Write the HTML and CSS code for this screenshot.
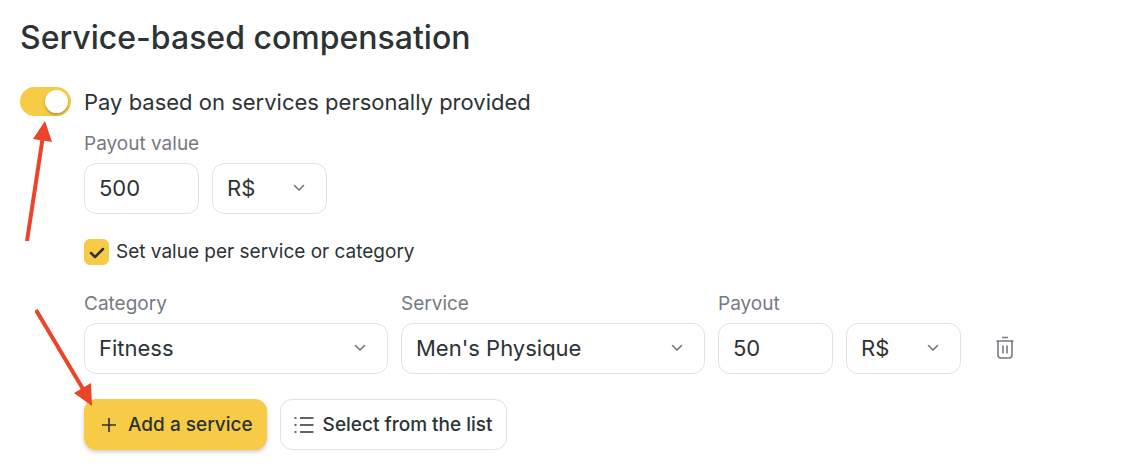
FILE: index.html
```html
<!DOCTYPE html>
<html lang="en">
<head>
    <meta charset="UTF-8">
    <meta name="viewport" content="width=device-width, initial-scale=1.0">
    <title>Service-based compensation</title>
    <link rel="stylesheet" href="styles.css">
</head>
<body>
    <main class="container">
        <h1>Service-based compensation</h1>

        <div class="toggle-row">
            <input type="checkbox" id="payServices" class="toggle" role="switch" checked>
            <label for="payServices">Pay based on services personally provided</label>
        </div>

        <div class="settings">
            <label class="field-label" for="payoutValue">Payout value</label>
            <div class="field-row">
                <input type="text" id="payoutValue" class="field field-small" value="500">
                <div class="select field-small">
                    <select class="field" aria-label="Payout value currency">
                        <option>R$</option>
                    </select>
                    <svg class="chevron" viewBox="0 0 12 8" aria-hidden="true"><path d="M1.5 1.5 6 6l4.500-4.500"/></svg>
                </div>
            </div>

            <div class="check-row">
                <span class="check">
                    <input type="checkbox" id="perService" checked>
                    <svg viewBox="0 0 25 26" aria-hidden="true"><path d="M7 14l4 4 8-8"/></svg>
                </span>
                <label for="perService">Set value per service or category</label>
            </div>

            <div class="service-row">
                <div class="form-group">
                    <label class="field-label" for="category">Category</label>
                    <div class="select">
                        <select id="category" class="field">
                            <option>Fitness</option>
                        </select>
                        <svg class="chevron" viewBox="0 0 12 8" aria-hidden="true"><path d="M1.5 1.5 6 6l4.500-4.500"/></svg>
                    </div>
                </div>
                <div class="form-group">
                    <label class="field-label" for="service">Service</label>
                    <div class="select">
                        <select id="service" class="field">
                            <option>Men's Physique</option>
                        </select>
                        <svg class="chevron" viewBox="0 0 12 8" aria-hidden="true"><path d="M1.5 1.5 6 6l4.500-4.500"/></svg>
                    </div>
                </div>
                <div class="form-group">
                    <label class="field-label" for="payout">Payout</label>
                    <input type="text" id="payout" class="field" value="50">
                </div>
                <div class="select">
                    <select class="field" aria-label="Payout currency">
                        <option>R$</option>
                    </select>
                    <svg class="chevron" viewBox="0 0 12 8" aria-hidden="true"><path d="M1.5 1.5 6 6l4.500-4.500"/></svg>
                </div>
                <button type="button" class="delete" aria-label="Delete service">
                    <svg viewBox="0 0 20 24" aria-hidden="true">
                        <path d="M7 1.500h6M1.500 5h17M3 5v14q0 3 3 3h8q3 0 3-3V5M8 9.500v8M12 9.500v8"/>
                    </svg>
                </button>
            </div>

            <div class="actions">
                <button type="button" class="button button-primary">
                    <svg class="icon-plus" viewBox="0 0 16 16" aria-hidden="true"><path d="M8 1v14M1 8h14"/></svg>
                    Add a service
                </button>
                <button type="button" class="button">
                    <svg class="icon-list" viewBox="0 0 20 16" aria-hidden="true">
                        <path d="M6 1H19.500M6 8H19.500M6 15H19.500"/>
                        <path d="M0.500 1h2M0.500 8h2M0.500 15h2"/>
                    </svg>
                    Select from the list
                </button>
            </div>
        </div>

        <!-- Pointers over the form -->
        <svg class="arrow arrow-toggle" viewBox="0 0 28 120" aria-hidden="true">
            <path class="shaft" d="M2 120 17.500 18"/>
            <path class="head" d="M20 0 27 21 8 18z"/>
        </svg>
        <svg class="arrow arrow-add" viewBox="0 0 58 98" aria-hidden="true">
            <path class="shaft" d="M1 1 48 80"/>
            <path class="head" d="M57 97 39 84 56 74z"/>
        </svg>
    </main>
</body>
</html>
```

FILE: styles.css
```css
* {
    box-sizing: border-box;
}

body {
    font-family: Inter, "Liberation Sans", sans-serif;
    margin: 0;
    background-color: #fff;
    color: #2d3335;
}

.container {
    position: relative;
    padding: 20px;
}

h1 {
    margin: 0 0 31px;
    font-size: 32px;
    line-height: 36px;
    font-weight: 500;
}

.toggle-row {
    display: flex;
    align-items: flex-start;
    gap: 13px;
    font-size: 22px;
    line-height: 30px;
}

.toggle {
    appearance: none;
    display: flex;
    align-items: center;
    justify-content: flex-end;
    width: 51px;
    height: 29px;
    margin: 0;
    padding: 3px;
    border-radius: 15px;
    background-color: #f7cb45;
    cursor: pointer;
}

.toggle::before {
    content: "";
    width: 23px;
    height: 23px;
    border-radius: 50%;
    background-color: #fff;
    box-shadow: 0 2px 3px rgba(0, 0, 0, 0.25);
}

.toggle:not(:checked) {
    justify-content: flex-start;
    background-color: #dcdde6;
}

.settings {
    margin: 14px 0 0 64px;
}

.field-label {
    display: block;
    margin-bottom: 6px;
    color: #777983;
    font-size: 19px;
    line-height: 26px;
}

.field-row {
    display: flex;
    gap: 13px;
}

.field {
    appearance: none;
    display: block;
    width: 100%;
    height: 51px;
    margin: 0;
    padding: 0 14px 2px;
    border: 1px solid #dfe0ea;
    border-radius: 12px;
    background-color: #fff;
    color: #2d3335;
    font-family: inherit;
    font-size: 22px;
}

.field-small {
    width: 115px;
}

.select {
    position: relative;
}

.chevron {
    position: absolute;
    top: 21px;
    right: 22px;
    width: 12px;
    height: 8px;
    pointer-events: none;
}

svg {
    fill: none;
    stroke: #2d3335;
    stroke-width: 1.6;
}

.chevron path {
    stroke: #74767c;
    stroke-linecap: round;
    stroke-linejoin: round;
}

.check-row {
    display: flex;
    align-items: center;
    gap: 7px;
    margin: 25px 0 26px;
    font-size: 19px;
    line-height: 26px;
}

.check {
    display: grid;
    width: 25px;
    height: 26px;
}

.check input,
.check svg {
    grid-area: 1 / 1;
    width: 100%;
    height: 100%;
    margin: 0;
}

.check input {
    appearance: none;
    border: 1px solid #dfe0ea;
    border-radius: 6px;
}

.check input:checked {
    border-color: #f7cb45;
    background-color: #f7cb45;
}

.check svg {
    stroke-width: 2.5;
    stroke-linecap: round;
    stroke-linejoin: round;
    pointer-events: none;
}

.check input:not(:checked) + svg {
    display: none;
}

.service-row {
    display: grid;
    grid-template-columns: minmax(0, 304px) minmax(0, 304px) 115px 115px auto;
    justify-content: start;
    align-items: end;
    gap: 13px;
}

.delete {
    display: flex;
    align-items: center;
    height: 51px;
    margin-left: 21px;
    padding: 0 0 2px;
    border: none;
    background: none;
    cursor: pointer;
}

.delete svg {
    width: 20px;
    height: 24px;
    stroke: #777983;
}

.actions {
    display: flex;
    gap: 13px;
    margin-top: 25px;
}

.button {
    display: flex;
    align-items: center;
    gap: 9px;
    height: 51px;
    padding: 0 13px;
    border: 1px solid #dfe0ea;
    border-radius: 12px;
    background-color: #fff;
    color: #2d3335;
    font-family: inherit;
    font-size: 19px;
    font-weight: 500;
    cursor: pointer;
}

.button-primary {
    gap: 11px;
    padding-left: 16px;
    border-color: #f7cb45;
    background-color: #f7cb45;
    box-shadow: 0 2px 4px rgba(0, 0, 0, 0.2);
}

.icon-plus {
    width: 16px;
    height: 16px;
}

.icon-list {
    width: 20px;
    height: 16px;
}

.arrow {
    position: absolute;
    pointer-events: none;
}

.arrow .shaft {
    stroke: #ec4428;
    stroke-width: 4;
}

.arrow .head {
    stroke: none;
    fill: #ec4428;
}

.arrow-toggle {
    top: 121px;
    left: 25px;
    width: 28px;
    height: 120px;
}

.arrow-add {
    top: 309px;
    left: 35px;
    width: 58px;
    height: 98px;
}
```
